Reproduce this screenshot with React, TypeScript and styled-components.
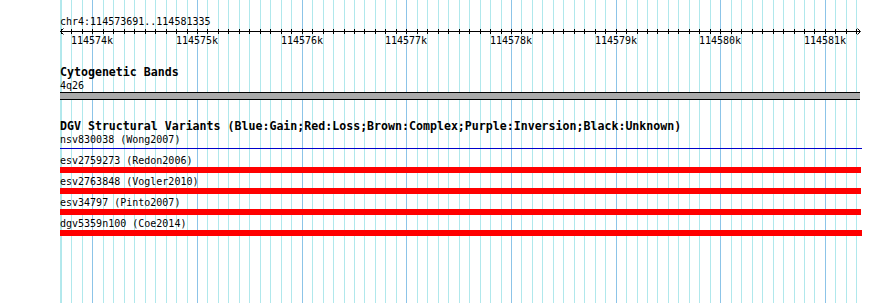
import React from 'react';
import styled, { createGlobalStyle } from 'styled-components';

const START = 114573691;
const END = 114581335;
const LEFT = 60;
const WIDTH = 800;

const toX = (pos: number): number => Math.round(((pos - START) * WIDTH) / (END - START));

const GlobalStyle = createGlobalStyle`
  html, body {
    margin: 0;
    padding: 0;
    background: #ffffff;
  }
  body {
    font-family: "DejaVu Sans Mono", monospace;
    color: #000000;
  }
`;

const Canvas = styled.div`
  position: relative;
  width: 890px;
  height: 303px;
  overflow: hidden;
  background: #ffffff;
`;

const GridLayer = styled.svg`
  position: absolute;
  left: 0;
  top: 0;
  z-index: 0;
`;

const Tracks = styled.div`
  position: relative;
  z-index: 1;
  display: flex;
  flex-direction: column;
  padding-left: ${LEFT}px;
  width: 802px;
`;

const SmallLabel = styled.div`
  font-size: 10px;
  line-height: 13px;
  white-space: nowrap;
`;

const RulerTitle = styled(SmallLabel)`
  margin-top: 15px;
`;

const TrackTitle = styled.div<{gap: number}>`
  margin-top: ${(props) => props.gap}px;
  font-size: 11.6px;
  font-weight: bold;
  line-height: 13px;
  white-space: nowrap;
`;

const BandBar = styled.div`
  height: 6px;
  width: 800px;
  background: #aaaaaa;
  border-top: 1px solid #000000;
  border-bottom: 1px solid #000000;
`;

const Divider = styled.div`
  margin-top: 2px;
  height: 1px;
  width: 802px;
  background: #0000cc;
`;

const VariantList = styled.div`
  display: flex;
  flex-direction: column;
  gap: 2px;
  margin-top: 5px;
`;

const VariantBar = styled.div`
  height: 6px;
  background: #ff0000;
`;

type Variant = { id: string; study: string; end: number };

const variants: Variant[] = [
  { id: 'esv2759273', study: 'Redon2006', end: 801 },
  { id: 'esv2763848', study: 'Vogler2010', end: 801 },
  { id: 'esv34797', study: 'Pinto2007', end: 801 },
  { id: 'dgv5359n100', study: 'Coe2014', end: 802 },
];

const gridPositions: number[] = [];
for (let p = Math.ceil(START / 100) * 100; p <= END; p += 100) gridPositions.push(p);

const Grid: React.FC = () => (
  <GridLayer width={890} height={303} shapeRendering="crispEdges">
    <line x1={LEFT + 0.5} x2={LEFT + 0.5} y1={0} y2={303} stroke="#b4e8ec" strokeWidth={1} />
    {gridPositions.map((p) => {
      const x = LEFT + toX(p) + 0.5;
      const major = p % 1000 === 0;
      return <line key={p} x1={x} x2={x} y1={0} y2={303} stroke={major ? '#8cc4e8' : '#b0e8ec'} strokeWidth={1} />;
    })}
  </GridLayer>
);

const Ruler: React.FC = () => (
  <svg width={802} height={20} shapeRendering="crispEdges" style={{ overflow: 'visible', display: 'block' }}>
    <line x1={0} x2={800} y1={3.5} y2={3.5} stroke="#000" strokeWidth={1} />
    <path d="M3.5 0.5 L0.5 3.5 L3.5 6.5" stroke="#000" fill="none" strokeWidth={1} shapeRendering="auto" />
    <path d="M797.5 0.5 L800.5 3.5 L797.5 6.5" stroke="#000" fill="none" strokeWidth={1} shapeRendering="auto" />
    {gridPositions.map((p) => {
      const x = toX(p) + 0.5;
      return <line key={p} x1={x} x2={x} y1={1} y2={6} stroke="#000" strokeWidth={1} />;
    })}
    {gridPositions.filter((p) => p % 1000 === 0).map((p) => (
      <text
        key={p}
        x={toX(p)}
        y={16}
        textAnchor="middle"
        fontFamily='"DejaVu Sans Mono", monospace'
        fontSize={10}
        fill="#000"
      >
        {`${p / 1000}k`}
      </text>
    ))}
  </svg>
);

const App: React.FC = () => (
  <Canvas>
    <GlobalStyle />
    <Grid />
    <Tracks>
      <RulerTitle>{`chr4:${START}..${END}`}</RulerTitle>
      <Ruler />
      <TrackTitle gap={18}>Cytogenetic Bands</TrackTitle>
      <SmallLabel>4q26</SmallLabel>
      <BandBar />
      <TrackTitle gap={20}>DGV Structural Variants (Blue:Gain;Red:Loss;Brown:Complex;Purple:Inversion;Black:Unknown)</TrackTitle>
      <SmallLabel>nsv830038 (Wong2007)</SmallLabel>
      <Divider />
      <VariantList>
        {variants.map((v) => (
          <div key={v.id}>
            <SmallLabel>{`${v.id} (${v.study})`}</SmallLabel>
            <VariantBar style={{ width: v.end }} />
          </div>
        ))}
      </VariantList>
    </Tracks>
  </Canvas>
);

export default App;
